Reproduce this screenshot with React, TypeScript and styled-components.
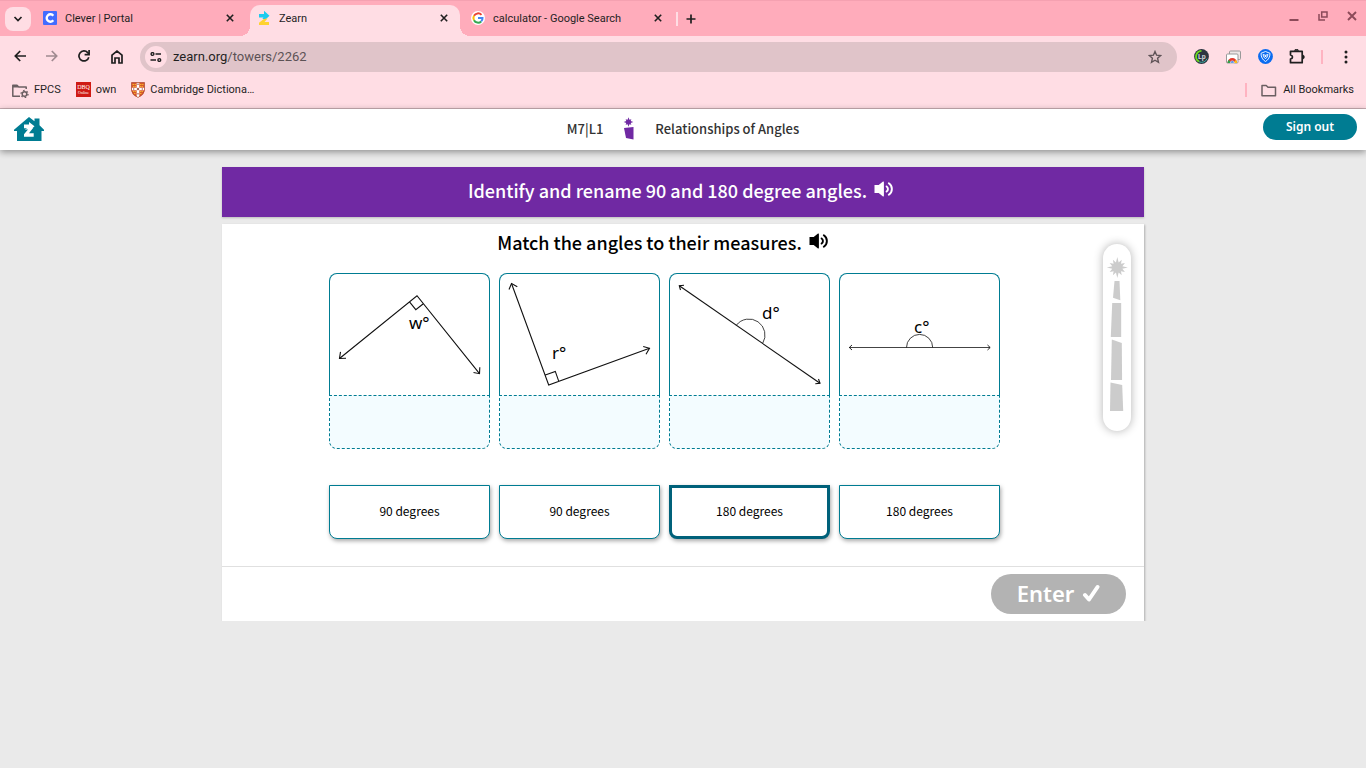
import React from "react";
import styled, { createGlobalStyle } from "styled-components";

const sourceSans = `"Noto Sans CJK SC", "Noto Sans", sans-serif`;
const teal = "#007c92";
const purple = "#7029a3";

const GlobalStyle = createGlobalStyle`
  *, *::before, *::after { box-sizing: border-box; }
  body { margin: 0; background: #eaeaea; font-family: Roboto, sans-serif; color: #1f1f1f; }
  button, input { font: inherit; color: inherit; }
  button { border: 0; padding: 0; background: none; cursor: pointer; }
  svg { display: block; flex: none; }
  h1, h2 { margin: 0; }
`;

/* ---------- browser window ---------- */

const Chrome = styled.header`
  background: #ffdde4;
  border-bottom: 1px solid #c9adb3;
`;

const TabStrip = styled.div`
  display: flex;
  align-items: center;
  height: 36px;
  padding-left: 5px;
  background: #ffacbb;
  border-top: 1px solid #f5a1b1;
`;

const TabSearch = styled.button`
  display: grid;
  place-items: center;
  width: 26px;
  height: 24px;
  margin-right: 5px;
  border-radius: 8px;
  background: #ffdde4;
`;

const Tabs = styled.div`
  display: flex;
  gap: 4px;
  height: 100%;
  padding-top: 4px;
`;

const TabItem = styled.div<{ $active?: boolean }>`
  position: relative;
  display: flex;
  align-items: center;
  gap: 8px;
  width: 210px;
  padding: 0 8px 5px 7px;
  border-radius: 10px 10px 0 0;
  background: ${(p) => (p.$active ? "#ffdde4" : "transparent")};
  font-size: 11px;
  line-height: 16px;

  &::before,
  &::after {
    content: ${(p) => (p.$active ? '""' : "none")};
    position: absolute;
    bottom: 0;
    width: 10px;
    height: 10px;
  }
  &::before {
    right: 100%;
    background: radial-gradient(circle at 0 0, transparent 10px, #ffdde4 10px);
  }
  &::after {
    left: 100%;
    background: radial-gradient(circle at 100% 0, transparent 10px, #ffdde4 10px);
  }
`;

const TabTitle = styled.span`
  flex: 1;
  padding-top: 2px;
  white-space: nowrap;
  overflow: hidden;
`;

const IconButton = styled.button<{ $size?: number }>`
  display: grid;
  place-items: center;
  flex: none;
  width: ${(p) => p.$size ?? 16}px;
  height: ${(p) => p.$size ?? 16}px;
`;

const Divider = styled.span<{ $color: string }>`
  width: 2px;
  height: 14px;
  background: ${(p) => p.$color};
`;

const NewTab = styled.div`
  display: flex;
  align-items: center;
  gap: 5px;
  padding-left: 2px;
`;

const WindowControls = styled.div`
  display: flex;
  gap: 13px;
  height: 100%;
  margin-left: auto;
  padding: 7px 6px 0 0;
  color: #8c4a59;
`;

const Toolbar = styled.div`
  display: flex;
  align-items: center;
  height: 41px;
  padding: 0 12px;
`;

const NavButtons = styled.div`
  display: flex;
  gap: 16px;
  margin-right: 14px;
`;

const AddressBar = styled.div`
  display: flex;
  align-items: center;
  flex: 1;
  height: 30px;
  padding: 0 14px 0 5px;
  border-radius: 15px;
  background: #e0c4c9;
  font-size: 13px;
  line-height: 18px;
`;

const SiteInfo = styled.button`
  display: grid;
  place-items: center;
  width: 22px;
  height: 22px;
  margin-right: 6px;
  border-radius: 50%;
  background: #ffdde4;
`;

const Url = styled.span`
  flex: 1;
  color: #5c5255;

  b {
    font-weight: 400;
    color: #1f1f1f;
  }
`;

const Extensions = styled.div`
  display: flex;
  align-items: center;
  gap: 16px;
  padding-left: 16px;
`;

const MenuGroup = styled.div`
  display: flex;
  align-items: center;
  gap: 15px;
  padding-left: 16px;
`;

const BookmarksBar = styled.nav`
  display: flex;
  align-items: center;
  gap: 15px;
  height: 31px;
  padding: 0 12px 6px 11px;
`;

const Bookmark = styled.a`
  display: flex;
  align-items: center;
  gap: 5px;
  color: #1f1f1f;
  font-size: 11px;
  line-height: 16px;
  text-decoration: none;
`;

const BookmarksEnd = styled.div`
  display: flex;
  align-items: center;
  gap: 13px;
  margin-left: auto;
`;

/* ---------- lesson page ---------- */

const SiteHeader = styled.header`
  display: grid;
  grid-template-columns: 1fr auto 1fr;
  align-items: center;
  height: 41px;
  padding: 0 9px 2px;
  background: #fff;
  box-shadow: 0 2px 7px rgba(0, 0, 0, 0.4);
`;

const HomeLink = styled.a`
  justify-self: start;
  padding-left: 5px;
`;

const LessonTitle = styled.div`
  display: flex;
  align-items: center;
  gap: 20px;
  color: #333;
  font-family: ${sourceSans};
  font-size: 13px;
  font-weight: 500;
  line-height: 20px;
`;

const SignOut = styled.button`
  justify-self: end;
  width: 94px;
  height: 26px;
  margin-bottom: 3px;
  border-radius: 13px;
  background: ${teal};
  color: #fff;
  font-family: "Noto Sans", sans-serif;
  font-size: 12px;
  font-weight: 600;
  line-height: 24px;
`;

const Main = styled.main`
  width: 100%;
  max-width: 922px;
  margin: 17px auto 0;
`;

const Banner = styled.section`
  display: flex;
  align-items: center;
  justify-content: center;
  gap: 7px;
  height: 50px;
  margin-bottom: 7px;
  padding: 0 4px 4px 0;
  background: ${purple};
  color: #fff;
  box-shadow: 0 1px 2px rgba(0, 0, 0, 0.2);
`;

const Heading = styled.h1`
  font-family: ${sourceSans};
  font-size: 18px;
  font-weight: 500;
  line-height: 28px;
`;

const SpeakerButton = styled.button`
  margin-bottom: 2px;
`;

const Card = styled.section`
  background: #fff;
  color: #000;
  box-shadow: 1px 1px 2px rgba(0, 0, 0, 0.25);
`;

const CardBody = styled.div`
  display: flex;
  align-items: flex-start;
  padding: 0 13px 27px 4px;
`;

const Activity = styled.div`
  display: flex;
  flex-direction: column;
  align-items: center;
  flex: 1;
`;

const Prompt = styled.div`
  display: flex;
  align-items: center;
  gap: 7px;
  height: 49px;
  padding: 0 3px 13px 0;
`;

const Columns = styled.div`
  display: grid;
  grid-template-columns: repeat(4, 161px);
  gap: 9px;
`;

const Answers = styled(Columns)`
  margin-top: 36px;
`;

const Tile = styled.div`
  height: 122px;
  border: 1px solid ${teal};
  border-bottom: 0;
  border-radius: 8px 8px 0 0;
`;

const DropZone = styled.div`
  height: 54px;
  border: 1px dashed ${teal};
  border-radius: 0 0 8px 8px;
  background: #f3fcff;
`;

const AngleLabel = styled.text`
  font-family: "Noto Sans", sans-serif;
  font-size: 17px;
`;

const Answer = styled.button<{ $selected?: boolean }>`
  height: 54px;
  padding-bottom: 2px;
  border: ${(p) => (p.$selected ? "3px solid #00617a" : `1px solid ${teal}`)};
  border-radius: 0 0 8px 8px;
  background: #fff;
  color: #000;
  box-shadow: 1px 2px 4px rgba(0, 0, 0, 0.35);
  font-family: ${sourceSans};
  font-size: 12px;
  line-height: 20px;
`;

const TowerRail = styled.aside`
  width: 28px;
  margin-top: 20px;
  border-radius: 14px;
  background: #fff;
  box-shadow: 0 0 10px rgba(0, 0, 0, 0.3);
`;

const CardFooter = styled.footer`
  display: flex;
  justify-content: flex-end;
  padding: 7px 18px;
  border-top: 1px solid #e0e0e0;
`;

const EnterButton = styled.button`
  display: flex;
  align-items: center;
  justify-content: center;
  gap: 8px;
  width: 135px;
  height: 40px;
  padding-bottom: 2px;
  border-radius: 20px;
  background: #b3b3b3;
  color: #fff;
  font-family: "Noto Sans", sans-serif;
  font-size: 22px;
  font-weight: 600;
  line-height: 30px;
`;

/* ---------- drawings ---------- */

const CloseIcon = () => (
  <svg width="8" height="8" viewBox="0 0 8 8" stroke="currentColor" strokeWidth="1.6">
    <path d="M.8.8l6.4 6.4M7.2.8L.8 7.2" />
  </svg>
);

const Speaker = () => (
  <svg width="20" height="16" viewBox="0 0 20 16" fill="currentColor">
    <path d="M.5 4h4.2L9 .6q.9-.5.9.6v13.6q0 1.100-.9.600L4.700 12H.5z" />
    <g fill="none" stroke="currentColor" strokeWidth="1.900" strokeLinecap="round">
      <path d="M12.600 5.400a3.200 3.200 0 0 1 0 5.200" />
      <path d="M14.800 2.200a7 7 0 0 1 0 11.600" />
    </g>
  </svg>
);

const FolderIcon = ({ gear }: { gear?: boolean }) => (
  <svg width="18" height="16" viewBox="0 0 18 16" fill="none" stroke="#6b5f62" strokeWidth="1.500">
    <path d={gear ? "M9 14.200H1.800V3.300H6l1.700 1.800h7.500V7" : "M2 3.500h4.200L8 5.300h7.500v8.400H2z"} strokeLinejoin="round" />
    {gear && (
      <>
        <path d="M2 4.500h5" strokeWidth="2" />
        <circle cx="13.500" cy="12" r="2.300" />
        <circle cx="13.500" cy="12" r="3.500" strokeWidth="1.300" strokeDasharray="1.600 2.060" />
      </>
    )}
  </svg>
);

const CleverIcon = () => (
  <svg width="14" height="14" viewBox="0 0 14 14">
    <rect width="14" height="14" rx="1" fill="#436cff" />
    <path d="M10.300 4.700A3.700 3.700 0 1 0 10.300 9.300" fill="none" stroke="#fff" strokeWidth="2.400" />
  </svg>
);

const ZearnIcon = () => (
  <svg width="14" height="16" viewBox="0 0 14 16">
    <path d="M2 4h5V.8l5.500 4.900L8 10 7 7.500H2z" fill="#1ecbef" />
    <path d="M7.500 8.500h3L7.500 12H12v3H2v-2.200z" fill="#ffd22e" />
    <path d="M7 6h3.500L8 9H5.500z" fill="#1ecbef" />
  </svg>
);

const GoogleIcon = () => (
  <svg width="14" height="14" viewBox="0 0 14 14">
    <circle cx="7" cy="7" r="7" fill="#fff" />
    <g fill="none" strokeWidth="2">
      <path d="M10.500 3.900A4.600 4.600 0 0 0 3 4.800" stroke="#ea4335" />
      <path d="M3 4.800A4.600 4.600 0 0 0 3 9.200" stroke="#fbbc05" />
      <path d="M3 9.200a4.600 4.600 0 0 0 7.200 1.200" stroke="#34a853" />
      <path d="M10.200 10.400A4.400 4.400 0 0 0 11.500 7H7" stroke="#4285f4" />
    </g>
  </svg>
);

const CrestIcon = () => (
  <svg width="14" height="16" viewBox="0 0 14 16">
    <path d="M.5.5h13v8Q13 13 7 15.500 1 13 .5 8.500z" fill="#d9552b" />
    <path d="M7 .5v15M.5 7h13" stroke="#fff" strokeWidth="2.600" />
    <path d="M1.500 2.500h3.500M2 4.500h3M9 2.500h3.500M9 4.500h3M2 9.500h3M3 11.500h2M9 9.500h3M9 11.500h2" stroke="#f1b52c" strokeWidth="1" strokeDasharray="1.500 .6" />
    <path d="M5.800 7h2.400M7 5.800v2.400M7 1.500v1.500M7 11v1.500M2 7h1.300M10.700 7H12" stroke="#8a3528" strokeWidth="1" />
    <path d="M.5.5h13v8Q13 13 7 15.500 1 13 .5 8.500z" fill="none" stroke="#a8482c" strokeWidth=".7" />
  </svg>
);

const DbqIcon = () => (
  <svg width="15" height="15" viewBox="0 0 15 15">
    <rect width="15" height="15" fill="#cf1a14" />
    <g fill="#fff" fontFamily="Liberation Serif, serif" textAnchor="middle">
      <text x="7.500" y="7" fontSize="6">DBQ</text>
      <text x="7.500" y="12" fontSize="4">Online</text>
    </g>
  </svg>
);

const HomeLogo = () => (
  <svg width="30" height="24" viewBox="0 0 30 24">
    <path d="M15 0l5.500 4.200V1.600h5v6.600L30 12.700v1.300h-2.500V24H3V14H0v-1.300z" fill={teal} />
    <path d="M10 7.500h5V4.900l5.500 4.400-4.500 4.200-1.500-2.300H10z" fill="#fff" />
    <path d="M15 11h4l-4 5.200h4.700v3.600H10v-2.600l4-4.700H10.800L15 10z" fill="#fff" />
  </svg>
);

const starPoints = (cx: number, cy: number, outer: number, inner: number, spikes = 12) =>
  Array.from({ length: spikes * 2 }, (_, i) => {
    const long = i % (spikes / 2) === 0;
    const r = i % 2 ? inner : long ? outer : outer * 0.84;
    const a = (Math.PI * i) / spikes - Math.PI / 2;
    return `${(cx + r * Math.cos(a)).toFixed(2)},${(cy + r * Math.sin(a)).toFixed(2)}`;
  }).join(" ");

const MiniTower = () => (
  <svg width="12" height="23" viewBox="0 0 12 23" fill={purple}>
    <polygon points={starPoints(5.5, 5, 4.8, 2.4, 8)} />
    <path d="M1 11l9.500-1v12.600L3 21z" />
  </svg>
);

const Tower = () => (
  <svg width="28" height="187" viewBox="0 0 28 187" fill="#ccc">
    <polygon points={starPoints(14.300, 23.500, 10.500, 5.200)} />
    <path d="M11.500 37h5l.8 19.200L10 53.800z" />
    <path d="M9.200 59h9v34H7.800z" />
    <path d="M8.800 95.500l10 3.500.3 37H8z" />
    <path d="M7.500 138.500l11.700 2.600 1 26H7z" />
  </svg>
);

const line = { fill: "none", stroke: "#111", strokeWidth: 1.1 };

const angleW = (
  <>
    <path {...line} d="M9.500 84.500L87 21.700l62.500 78M79.300 27.600l6.500 8.100 7.200-5.700" />
    <path {...line} d="M10.500 77.800l-1 6.700 6.500-.2M143.500 98.500l6 1.200.3-6.500" />
    <AngleLabel x="79" y="55">w°</AngleLabel>
  </>
);

const angleR = (
  <>
    <path {...line} d="M11.500 9.500L48.700 111l100.800-36.700M45.300 101l10-3.600 3.500 10" />
    <path {...line} d="M9 15.500l2.500-6 5.800 3.200M143.200 72.500l6.300 1.800-3.500 6" />
    <AngleLabel x="52" y="85">r°</AngleLabel>
  </>
);

const angleD = (
  <>
    <path {...line} d="M9.300 11.700L150 109.300" />
    <path {...line} d="M10.500 16l-1.200-4.300 4.700-.5M148.500 105l1.500 4.300-4.700.5" />
    <path {...line} strokeWidth=".8" d="M66.300 51.300a16 16 0 0 1 26.400 18" />
    <AngleLabel x="92" y="45">d°</AngleLabel>
  </>
);

const angleC = (
  <>
    <path {...line} strokeWidth="1" stroke="#444" d="M9 73.500h141" />
    <path {...line} strokeWidth=".9" d="M12 71l-2.700 2.500L12 76M147.500 71l2.700 2.500-2.700 2.500" />
    <path {...line} strokeWidth=".8" d="M66.500 73.500a13.100 13.100 0 0 1 26.200 0" />
    <AngleLabel x="74" y="59">c°</AngleLabel>
  </>
);

const problems = [
  { id: "w", drawing: angleW },
  { id: "r", drawing: angleR },
  { id: "d", drawing: angleD },
  { id: "c", drawing: angleC },
];

const answers = [
  { text: "90 degrees" },
  { text: "90 degrees" },
  { text: "180 degrees", selected: true },
  { text: "180 degrees" },
];

const tabs = [
  { title: "Clever | Portal", icon: <CleverIcon /> },
  { title: "Zearn", icon: <ZearnIcon />, active: true },
  { title: "calculator - Google Search", icon: <GoogleIcon /> },
];

const stroke = { fill: "none", stroke: "currentColor", strokeWidth: 1.7 };

export default function App() {
  return (
    <>
      <GlobalStyle />
      <Chrome>
        <TabStrip>
          <TabSearch aria-label="Search tabs">
            <svg width="10" height="6" viewBox="0 0 10 6" {...stroke}>
              <path d="M1.500 1L5 4.500 8.500 1" />
            </svg>
          </TabSearch>
          <Tabs>
            {tabs.map((t) => (
              <TabItem key={t.title} $active={t.active}>
                {t.icon}
                <TabTitle>{t.title}</TabTitle>
                <IconButton aria-label={`Close ${t.title}`}>
                  <CloseIcon />
                </IconButton>
              </TabItem>
            ))}
          </Tabs>
          <NewTab>
            <Divider $color="#ffdde4" />
            <IconButton aria-label="New tab">
              <svg width="10" height="10" viewBox="0 0 10 10" {...stroke}>
                <path d="M5 .5v9M.5 5h9" />
              </svg>
            </IconButton>
          </NewTab>
          <WindowControls>
            <IconButton aria-label="Minimize">
              <svg width="10" height="10" viewBox="0 0 10 10" {...stroke} strokeWidth="2">
                <path d="M.5 9h9" />
              </svg>
            </IconButton>
            <IconButton aria-label="Restore">
              <svg width="10" height="10" viewBox="0 0 10 10" {...stroke} strokeWidth="1.500">
                <path d="M3.700 1h5.300v5H3.700zM1 3v6h6" />
              </svg>
            </IconButton>
            <IconButton aria-label="Close window">
              <svg width="10" height="10" viewBox="0 0 10 10" {...stroke} strokeWidth="1.900">
                <path d="M1 1l8 8M9 1L1 9" />
              </svg>
            </IconButton>
          </WindowControls>
        </TabStrip>

        <Toolbar>
          <NavButtons>
            <IconButton aria-label="Back">
              <svg width="12" height="12" viewBox="0 0 12 12" {...stroke}>
                <path d="M12 6H1.500M6.200 1L1.300 6l4.900 5" />
              </svg>
            </IconButton>
            <IconButton aria-label="Forward" disabled>
              <svg width="12" height="12" viewBox="0 0 12 12" {...stroke} stroke="#a08a90">
                <path d="M0 6h10.500M5.800 1l4.900 5-4.900 5" />
              </svg>
            </IconButton>
            <IconButton aria-label="Reload">
              <svg width="12" height="12" viewBox="0 0 12 12" {...stroke}>
                <path d="M10.800 7.200A5 5 0 1 1 9.700 2.600L11 4" />
                <path d="M11.100 0v4.600H6.600" />
              </svg>
            </IconButton>
            <IconButton aria-label="Home" $size={18}>
              <svg width="12" height="14" viewBox="0 0 12 14" {...stroke}>
                <path d="M1 13V5.200L6 1.200l5 4V13H8V8H4v5z" />
              </svg>
            </IconButton>
          </NavButtons>
          <AddressBar>
            <SiteInfo aria-label="Site information">
              <svg width="12" height="10" viewBox="0 0 12 10" {...stroke} strokeWidth="1.400">
                <circle cx="2.500" cy="2" r="1.400" />
                <path d="M5.500 2H11M.5 8H6" />
                <circle cx="9.300" cy="8" r="1.400" />
              </svg>
            </SiteInfo>
            <Url>
              <b>zearn.org</b>/towers/2262
            </Url>
            <IconButton aria-label="Bookmark this tab">
              <svg width="14" height="14" viewBox="0 0 14 14" {...stroke} stroke="#5f5357" strokeWidth="1.400">
                <path d="M7 1.500l1.600 3.700 4 .4-3 2.700.9 4L7 10.200l-3.500 2.100.9-4-3-2.700 4-.4z" />
              </svg>
            </IconButton>
          </AddressBar>
          <Extensions>
            <IconButton aria-label="Lp extension">
              <svg width="15" height="15" viewBox="0 0 15 15">
                <circle cx="7.500" cy="7.500" r="7.400" fill="#2c3540" />
                <path d="M5 12.500A5.700 5.700 0 0 1 7.500 1.800" fill="none" stroke="#6fdc1e" strokeWidth="1.800" />
                <path d="M5 12.700a5.800 5.800 0 0 0 8-3" fill="none" stroke="#3fb1a6" strokeWidth="1" />
                <text x="7.800" y="10" fontSize="7" fontWeight="700" textAnchor="middle" fill="#cfd6dc">Lp</text>
              </svg>
            </IconButton>
            <IconButton aria-label="Web store extension">
              <svg width="15" height="14" viewBox="0 0 15 14">
                <rect x="3.500" y="1" width="11" height="8.500" rx="1" fill="#eee6e6" stroke="#999" />
                <rect x=".5" y="4" width="11.500" height="9" rx="1" fill="#fff" stroke="#999" />
                <path d="M1.500 13a4.800 5 0 0 1 9.600 0z" fill="#e33b2e" />
                <path d="M1.500 13a4.800 5 0 0 1 1.200-3.200l2.500 3.200z" fill="#2ba24c" />
                <path d="M11.100 13a4.800 5 0 0 0-1.200-3.200l-2.500 3.200z" fill="#fbc116" />
                <path d="M4.300 13a2 2.200 0 0 1 4 0z" fill="#3b7de9" stroke="#fff" strokeWidth=".5" />
              </svg>
            </IconButton>
            <IconButton aria-label="Shield extension">
              <svg width="15" height="15" viewBox="0 0 15 15" fill="none">
                <circle cx="7.500" cy="7.500" r="7.400" fill="#0b6cf0" />
                <path d="M7.500 2.500l4.500 1.800q0 5.500-4.500 8.200Q3 9.800 3 4.300z" stroke="#fff" strokeWidth=".9" />
                <path d="M5 5.500l2.500.8 2.500-.8q-.3 2.700-2.500 4.300Q5.300 8.200 5 5.500z" stroke="#fff" strokeWidth=".9" />
                <circle cx="7.500" cy="7.200" r=".9" fill="#fff" />
              </svg>
            </IconButton>
            <IconButton aria-label="Extensions">
              <svg width="16" height="16" viewBox="0 0 16 16" {...stroke}>
                <path d="M1.500 2.300h11.700v11.400H1.500v-3.700q2-.3 2-2t-2-2z" strokeLinejoin="round" />
                <path d="M5.500 1.700a2 1.500 0 0 1 4 0M13.500 6a1.800 2 0 0 1 0 4z" fill="currentColor" strokeWidth=".8" />
              </svg>
            </IconButton>
          </Extensions>
          <MenuGroup>
            <Divider $color="#ffb3c1" />
            <IconButton aria-label="Browser menu">
              <svg width="4" height="14" viewBox="0 0 4 14" fill="currentColor">
                <circle cx="2" cy="2" r="1.500" />
                <circle cx="2" cy="7" r="1.500" />
                <circle cx="2" cy="12" r="1.500" />
              </svg>
            </IconButton>
          </MenuGroup>
        </Toolbar>

        <BookmarksBar aria-label="Bookmarks">
          <Bookmark href="#fpcs">
            <FolderIcon gear />
            FPCS
          </Bookmark>
          <Bookmark href="#own">
            <DbqIcon />
            own
          </Bookmark>
          <Bookmark href="#cambridge">
            <CrestIcon />
            Cambridge Dictiona…
          </Bookmark>
          <BookmarksEnd>
            <Divider $color="#ffb3c1" />
            <Bookmark href="#all">
              <FolderIcon />
              All Bookmarks
            </Bookmark>
          </BookmarksEnd>
        </BookmarksBar>
      </Chrome>

      <SiteHeader>
        <HomeLink href="#home" aria-label="Home">
          <HomeLogo />
        </HomeLink>
        <LessonTitle>
          <span>M7|L1</span>
          <MiniTower />
          <span>Relationships of Angles</span>
        </LessonTitle>
        <SignOut>Sign out</SignOut>
      </SiteHeader>

      <Main>
        <Banner>
          <Heading>Identify and rename 90 and 180 degree angles.</Heading>
          <SpeakerButton aria-label="Read title aloud">
            <Speaker />
          </SpeakerButton>
        </Banner>
        <Card>
          <CardBody>
            <Activity>
              <Prompt>
                <Heading as="h2">Match the angles to their measures.</Heading>
                <SpeakerButton aria-label="Read prompt aloud">
                  <Speaker />
                </SpeakerButton>
              </Prompt>
              <Columns>
                {problems.map((p) => (
                  <div key={p.id}>
                    <Tile>
                      <svg width="159" height="121" viewBox="0 0 159 121" role="img" aria-label={`Angle ${p.id}`}>
                        {p.drawing}
                      </svg>
                    </Tile>
                    <DropZone />
                  </div>
                ))}
              </Columns>
              <Answers>
                {answers.map((a, i) => (
                  <Answer key={i} $selected={a.selected} aria-pressed={!!a.selected}>
                    {a.text}
                  </Answer>
                ))}
              </Answers>
            </Activity>
            <TowerRail aria-label="Tower progress">
              <Tower />
            </TowerRail>
          </CardBody>
          <CardFooter>
            <EnterButton>
              Enter
              <svg width="18" height="18" viewBox="0 0 18 18" {...stroke} strokeWidth="4" strokeLinecap="round" strokeLinejoin="round">
                <path d="M3 11l4 4.500L15.500 3" />
              </svg>
            </EnterButton>
          </CardFooter>
        </Card>
      </Main>
    </>
  );
}
